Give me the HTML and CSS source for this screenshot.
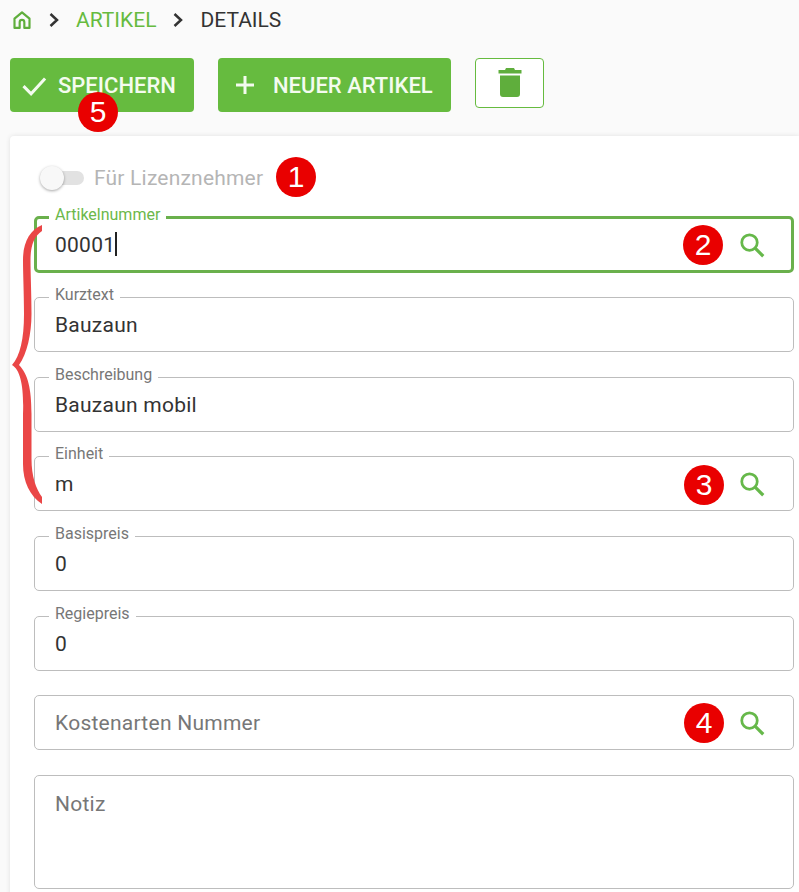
FILE: index.html
```html
<!DOCTYPE html>
<html lang="de">
<head>
  <meta charset="UTF-8">
  <meta name="viewport" content="width=device-width, initial-scale=1.0">
  <title>Artikel Details</title>
  <link rel="stylesheet" href="styles.css">
</head>
<body>

  <!-- Breadcrumb -->
  <nav class="breadcrumb">
    <svg class="home-icon" viewBox="0 0 24 24" width="20" height="20"><path d="M12 2.800 3 10.400V21.500h6.200v-6.900a2.800 2.800 0 0 1 5.600 0v6.900H21V10.400z" fill="none" stroke="#5fae3c" stroke-width="2.600" stroke-linejoin="round"/></svg>
    <svg class="chevron" viewBox="0 0 12 16" width="12" height="16"><path d="M2.500 2 9 8l-6.500 6" fill="none" stroke="#333" stroke-width="2.500"/></svg>
    <a class="crumb-link">ARTIKEL</a>
    <svg class="chevron" viewBox="0 0 12 16" width="12" height="16"><path d="M2.500 2 9 8l-6.500 6" fill="none" stroke="#333" stroke-width="2.500"/></svg>
    <span class="crumb-current">DETAILS</span>
  </nav>

  <!-- Buttons -->
  <div class="toolbar">
    <button class="btn btn-save">
      <svg viewBox="0 0 24 24" width="28" height="28"><path d="M3 13l6.500 6.500L21.500 6.500" fill="none" stroke="#f4fbef" stroke-width="2.600"/></svg>
      SPEICHERN
    </button>
    <button class="btn btn-new">
      <svg viewBox="0 0 24 24" width="24" height="24"><path d="M12 3v18M3 12h18" fill="none" stroke="#f4fbef" stroke-width="3"/></svg>
      NEUER ARTIKEL
    </button>
    <button class="btn-delete">
      <svg viewBox="0 0 24 32" width="24" height="32"><path d="M8 1h8l1 2h6.500v3.500H.5V3H7zM2 8.500h20V27a3 3 0 0 1-3 3H5a3 3 0 0 1-3-3z" fill="#5fae3c"/></svg>
    </button>
  </div>

  <!-- Formular -->
  <main class="card">
    <div class="switch-row">
      <span class="switch"><span class="knob"></span></span>
      <span class="switch-label">Für Lizenznehmer</span>
    </div>

    <div class="form">
      <div class="field field-focus">
        <span class="field-label">Artikelnummer</span>
        <span class="value">00001<span class="caret"></span></span>
        <svg class="search" viewBox="0 0 24 24" width="30" height="30"><circle cx="10" cy="10" r="6.200" fill="none" stroke="#66b84a" stroke-width="2.200"/><path d="M14.500 14.500 21 21" stroke="#66b84a" stroke-width="2.600"/></svg>
      </div>
      <div class="field">
        <span class="field-label">Kurztext</span>
        <span class="value">Bauzaun</span>
      </div>
      <div class="field">
        <span class="field-label">Beschreibung</span>
        <span class="value">Bauzaun mobil</span>
      </div>
      <div class="field">
        <span class="field-label">Einheit</span>
        <span class="value">m</span>
        <svg class="search" viewBox="0 0 24 24" width="30" height="30"><circle cx="10" cy="10" r="6.200" fill="none" stroke="#66b84a" stroke-width="2.200"/><path d="M14.500 14.500 21 21" stroke="#66b84a" stroke-width="2.600"/></svg>
      </div>
      <div class="field">
        <span class="field-label">Basispreis</span>
        <span class="value">0</span>
      </div>
      <div class="field">
        <span class="field-label">Regiepreis</span>
        <span class="value">0</span>
      </div>
      <div class="field">
        <span class="placeholder">Kostenarten Nummer</span>
        <svg class="search" viewBox="0 0 24 24" width="30" height="30"><circle cx="10" cy="10" r="6.200" fill="none" stroke="#66b84a" stroke-width="2.200"/><path d="M14.500 14.500 21 21" stroke="#66b84a" stroke-width="2.600"/></svg>
      </div>
      <div class="field field-area">
        <span class="placeholder">Notiz</span>
      </div>
    </div>
  </main>

  <!-- Markierungen über dem Screenshot -->
  <svg class="brace" viewBox="0 0 40 290" width="40" height="290"><path d="M30 1C18 6 11 18 11 36C11 50 12 70 12 90C12 115 8 132 0 141C9 146 12 165 11 190L11 240C11 258 18 272 30 280L30 273C24 265 19.500 252 19.500 235V190C19.500 165 16 150 7 141C15 130 19.500 110 19.500 90C19.500 70 18.500 50 18.500 36C18.500 22 22 12 30 7Z" fill="#ea4646"/></svg>
  <span class="badge badge-1">1</span>
  <span class="badge badge-2">2</span>
  <span class="badge badge-3">3</span>
  <span class="badge badge-4">4</span>
  <span class="badge badge-5">5</span>

</body>
</html>
```

FILE: styles.css
```css
html, body {
  height: 892px;
  overflow: hidden;
}
body {
  position: relative;
  margin: 0;
  background: #fafafa;
  color: #333;
  font-family: Roboto, "Liberation Sans", sans-serif;
}

/* breadcrumb */
.breadcrumb {
  display: flex;
  align-items: center;
  height: 20px;
  padding: 10px 0 0 12px;
  font-size: 21px;
}
.chevron {
  margin-left: 16px;
  margin-right: 16px;
}
.crumb-link {
  color: #66bb3f;
}
.crumb-current {
  color: #333;
}

/* toolbar */
.toolbar {
  display: flex;
  align-items: flex-start;
  gap: 24px;
  margin-top: 28px;
  padding-left: 10px;
}
.btn {
  display: flex;
  align-items: center;
  height: 54px;
  padding: 0;
  border: none;
  border-radius: 4px;
  background: #66bb3f;
  color: #f4fbef;
  font-family: inherit;
  font-size: 22px;
  font-weight: 500;
}
.btn-save {
  width: 184px;
  padding-left: 10px;
  gap: 10px;
}
.btn-new {
  width: 233px;
  padding-left: 15px;
  gap: 16px;
}
.btn-delete {
  display: flex;
  align-items: center;
  justify-content: center;
  width: 69px;
  height: 50px;
  padding: 0;
  border: 1px solid #66bb3f;
  border-radius: 4px;
  background: #fff;
}

/* card */
.card {
  margin: 24px 0 0 10px;
  padding: 22px 5px 0 24px;
  height: 760px;
  background: #fff;
  border-radius: 4px 0 0 0;
  box-shadow: 0 0 5px rgba(0,0,0,0.1);
}
.switch-row {
  display: flex;
  align-items: center;
  height: 40px;
  margin-bottom: 18px;
}
.switch {
  position: relative;
  width: 40px;
  height: 14px;
  margin-left: 10px;
  border-radius: 7px;
  background: #e2e2e2;
}
.knob {
  position: absolute;
  left: -4px;
  top: -5px;
  width: 24px;
  height: 24px;
  border-radius: 50%;
  background: #f8f8f8;
  box-shadow: 0 1px 3px rgba(0,0,0,0.35);
}
.switch-label {
  margin-left: 10px;
  font-size: 21px;
  letter-spacing: 0.200px;
  color: #b5b5b5;
}

/* fields */
.form {
  display: flex;
  flex-direction: column;
  gap: 24.600px;
}
.field {
  position: relative;
  display: flex;
  align-items: center;
  justify-content: space-between;
  box-sizing: border-box;
  height: 55px;
  padding: 1px 26px 0 20px;
  border: 1px solid #bdbdbd;
  border-radius: 5px;
  font-size: 21px;
}
.field-focus {
  height: 57px;
  margin-bottom: -0.300px;
  padding: 0 24px 0 18px;
  border: 3px solid #6ab04c;
}
.field-area {
  align-items: flex-start;
  height: 114px;
  padding-top: 16px;
}
.field-label {
  position: absolute;
  top: -12px;
  left: 14px;
  padding: 0 6px;
  background: #fff;
  font-size: 16px;
  line-height: 18px;
  color: #777;
}
.field-focus .field-label {
  top: -13px;
  left: 12px;
  color: #6cb84a;
}
.value {
  color: #333;
  letter-spacing: 0.250px;
}
.placeholder {
  color: #777;
  letter-spacing: 0.250px;
}
.caret {
  display: inline-block;
  width: 2px;
  height: 24px;
  margin-left: 0;
  background: #222;
  vertical-align: -4px;
}

/* annotations */
.badge {
  position: absolute;
  width: 40px;
  height: 40px;
  border-radius: 50%;
  background: #e90000;
  color: #fff;
  font-family: "Liberation Sans", sans-serif;
  font-size: 30px;
  line-height: 40px;
  text-align: center;
}
.badge-1 { left: 276px; top: 157px; }
.badge-2 { left: 683px; top: 225px; }
.badge-3 { left: 684px; top: 465px; }
.badge-4 { left: 684px; top: 703px; }
.badge-5 { left: 78px; top: 92px; }
.brace {
  position: absolute;
  left: 12px;
  top: 224px;
}
```
